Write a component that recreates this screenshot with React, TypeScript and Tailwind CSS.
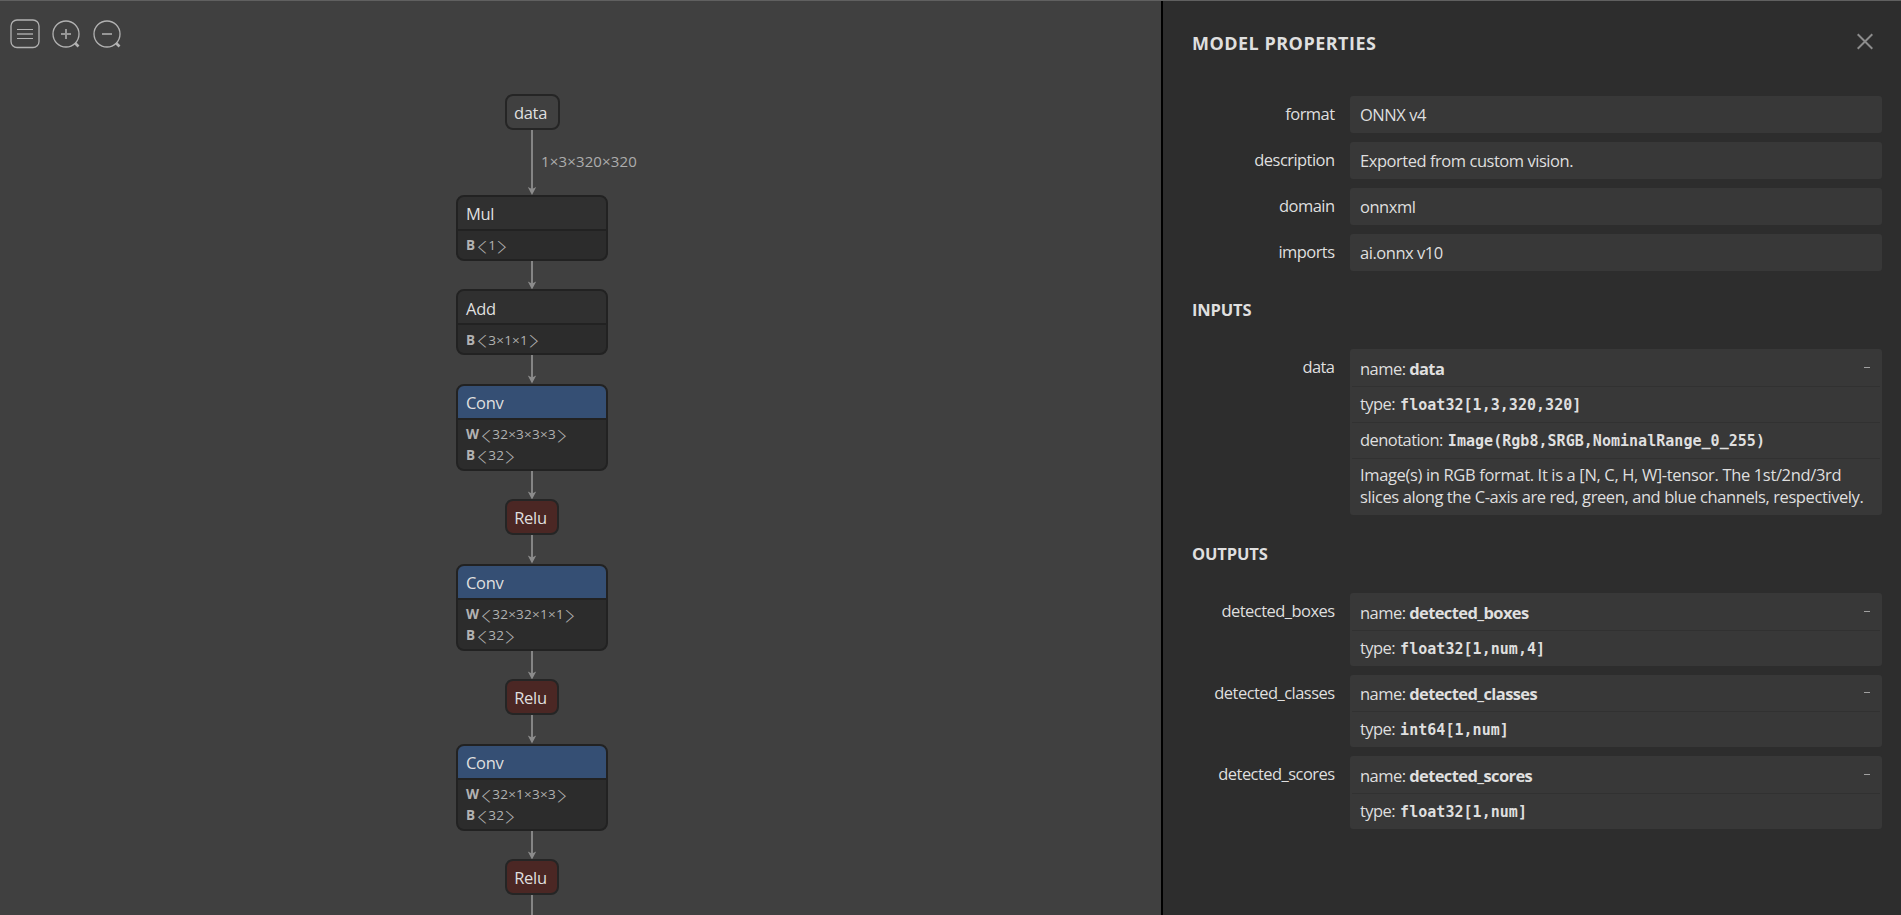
import React from 'react';

type Weight = { name: string; dims: string };
type GraphNode = { op: string; kind: 'io' | 'plain' | 'layer' | 'activation'; weights?: Weight[] };

const nodes: GraphNode[] = [
  { op: 'data', kind: 'io' },
  { op: 'Mul', kind: 'plain', weights: [{ name: 'B', dims: '1' }] },
  { op: 'Add', kind: 'plain', weights: [{ name: 'B', dims: '3×1×1' }] },
  { op: 'Conv', kind: 'layer', weights: [{ name: 'W', dims: '32×3×3×3' }, { name: 'B', dims: '32' }] },
  { op: 'Relu', kind: 'activation' },
  { op: 'Conv', kind: 'layer', weights: [{ name: 'W', dims: '32×32×1×1' }, { name: 'B', dims: '32' }] },
  { op: 'Relu', kind: 'activation' },
  { op: 'Conv', kind: 'layer', weights: [{ name: 'W', dims: '32×1×3×3' }, { name: 'B', dims: '32' }] },
  { op: 'Relu', kind: 'activation' },
];

function Edge({ height, label }: { height: number; label?: string }) {
  return (
    <div className="relative flex shrink-0 justify-center">
      <svg width="12" height={height} className="block">
        <line x1="6" y1="0" x2="6" y2={height - 2} stroke="#858585" strokeWidth="2" />
        <path d={`M6 ${height} L1.8 ${height - 8} L6 ${height - 6} L10.2 ${height - 8} Z`} fill="#8c8c8c" />
      </svg>
      {label && (
        <span className="absolute left-[15px] top-[20px] whitespace-nowrap text-[15px] leading-[22px] tracking-[0.15px] text-[#adadad]">
          {label}
        </span>
      )}
    </div>
  );
}

function NodeBox({ node }: { node: GraphNode }) {
  if (!node.weights) {
    return (
      <div
        className={`flex h-[36px] shrink-0 items-center justify-center rounded-[8px] border-2 border-[#252525] pr-[3px] pt-[2px] text-[16.5px] tracking-[-0.3px] text-[#dfdfdf] ${
          node.kind === 'io' ? 'w-[55px] bg-[#404040]' : 'w-[54px] bg-[#4b2724]'
        }`}
      >
        {node.op}
      </div>
    );
  }
  return (
    <div className="w-[152px] shrink-0 overflow-hidden rounded-[8px] border-2 border-[#222222] bg-[#2c2c2c]">
      <div
        className={`flex h-[34px] items-center border-b-2 border-[#222222] pl-[8px] pt-[3px] text-[16.5px] tracking-[-0.3px] text-[#dfdfdf] ${
          node.kind === 'layer' ? 'bg-[#354f74]' : 'bg-[#303030]'
        }`}
      >
        {node.op}
      </div>
      <div className={`pl-[8px] pt-[4.2px] text-[13.5px] text-[#b2b2b2] ${node.kind === 'layer' ? 'h-[49px]' : 'h-[28px]'}`}>
        {node.weights.map((w) => (
          <div key={w.name} className="flex h-[21px] items-center whitespace-pre">
            <b>{w.name}</b>
            <Bracket>〈</Bracket>
            <span className="tracking-[0.25px]">{w.dims}</span>
            <Bracket>〉</Bracket>
          </div>
        ))}
      </div>
    </div>
  );
}

function Bracket({ children }: { children: string }) {
  return (
    <span className="mx-[3.2px] inline-block w-[6.75px] scale-x-[1.75] font-['Noto_Sans_CJK_JP',sans-serif] font-light leading-[18px] [font-feature-settings:'halt']">
      {children}
    </span>
  );
}

function Row({ label, children }: { label: string; children: React.ReactNode }) {
  return (
    <div className="flex">
      <div className="w-[141.5px] shrink-0 pt-[7px] text-right leading-[22px]">{label}</div>
      <div className="ml-[15.5px] w-[532px] rounded-[3px] bg-[#383838]">{children}</div>
    </div>
  );
}

function Field({ label, value }: { label: string; value: string }) {
  return (
    <Row label={label}>
      <div className="flex h-[37px] items-center pl-[10px] pt-[1px] tracking-[-0.46px]">{value}</div>
    </Row>
  );
}

function Argument({ id, type, denotation, children }: { id: string; type: string; denotation?: string; children?: React.ReactNode }) {
  const mono = "font-['DejaVu_Sans_Mono',monospace] text-[15px] tracking-[0.03px] font-bold pt-[2px] pl-px";
  return (
    <Row label={id}>
      <div className="flex h-[36.5px] items-center justify-between pl-[10px] pr-[12px] pt-[4px]">
        <span>name: <b className="tracking-[-0.6px]">{id}</b></span>
        <span className="h-px w-[6px] -translate-y-[2px] bg-[#a0a0a0]" />
      </div>
      <Detail label="type:"><span className={mono}>{type}</span></Detail>
      {denotation && <Detail label="denotation:"><span className={mono}>{denotation}</span></Detail>}
      {children}
    </Row>
  );
}

function Detail({ label, children }: { label: string; children: React.ReactNode }) {
  return (
    <div className="mx-[2px] flex h-[36px] items-center gap-[4px] border-t border-[#313131] pl-[8px]">
      <span>{label}</span>
      {children}
    </div>
  );
}

export default function App() {
  return (
    <div className="flex h-[915px] w-[1901px] overflow-hidden border-t border-[#606060] bg-[#404040] font-['Open_Sans','Noto_Sans',sans-serif]">
      <main className="relative w-[1161px] shrink-0 overflow-hidden">
        <div className="flex w-[1064px] flex-col items-center pt-[93px]">
          {nodes.map((n, i) => (
            <React.Fragment key={i}>
              <NodeBox node={n} />
              <Edge height={i === 0 ? 64.9 : 28.5} label={i === 0 ? '1×3×320×320' : undefined} />
            </React.Fragment>
          ))}
        </div>
        <svg className="absolute left-0 top-0" width="130" height="59" viewBox="0 1 130 59" fill="none" stroke="#b2b2b2">
          <rect x="11" y="20" width="28" height="27.5" rx="6" strokeWidth="1.3" />
          <path d="M17 29.5H33M17 38.5H33" strokeWidth="1" />
          <path d="M17 34H33" stroke="#8c8c8c" strokeWidth="2" />
          <circle cx="66" cy="34" r="13" strokeWidth="1.3" />
          <path d="M75 43l3.5 3.5" strokeWidth="2.6" />
          <path d="M61 34H71M66 29V39" stroke="#969696" strokeWidth="2" />
          <circle cx="107" cy="34" r="13" strokeWidth="1.3" />
          <path d="M116 43l3.5 3.5" strokeWidth="2.6" />
          <path d="M102 34H112" stroke="#969696" strokeWidth="2" />
        </svg>
      </main>
      <aside className="w-[740px] shrink-0 border-l-2 border-black bg-[#2d2d2d] pl-[30px] text-[16.5px] tracking-[-0.55px] text-[#dfdfdf]">
        <div className="flex h-[95px] items-start justify-between pr-[28px]">
          <h1 className="-ml-px pt-[29px] text-[18px] font-bold leading-[26px] tracking-[0.48px]">MODEL PROPERTIES</h1>
          <svg width="16" height="17" viewBox="0 0 16 17" className="mt-[32px]" stroke="#8c8c8c" strokeWidth="2">
            <path d="M.7 1.2l14.6 14.6M15.3 1.2l-14.6 14.6" />
          </svg>
        </div>
        <div className="flex flex-col gap-[9px]">
          <Field label="format" value="ONNX v4" />
          <Field label="description" value="Exported from custom vision." />
          <Field label="domain" value="onnxml" />
          <Field label="imports" value="ai.onnx v10" />
        </div>
        <h2 className="-ml-px h-[78px] pt-[28px] font-bold leading-[22px] tracking-[-0.15px]">INPUTS</h2>
        <Argument id="data" type="float32[1,3,320,320]" denotation="Image(Rgb8,SRGB,NominalRange_0_255)">
          <div className="mx-[2px] h-[57.5px] whitespace-nowrap border-t border-[#313131] pl-[8px] pt-[5px] leading-[22px]">
            <p className="tracking-[-0.35px]">Image(s) in RGB format. It is a [N, C, H, W]-tensor. The 1st/2nd/3rd</p>
            <p className="tracking-[-0.41px]">slices along the C-axis are red, green, and blue channels, respectively.</p>
          </div>
        </Argument>
        <h2 className="-ml-px h-[78px] pt-[28px] font-bold leading-[22px] tracking-[-0.15px]">OUTPUTS</h2>
        <div className="flex flex-col gap-[9px]">
          <Argument id="detected_boxes" type="float32[1,num,4]" />
          <Argument id="detected_classes" type="int64[1,num]" />
          <Argument id="detected_scores" type="float32[1,num]" />
        </div>
      </aside>
    </div>
  );
}
